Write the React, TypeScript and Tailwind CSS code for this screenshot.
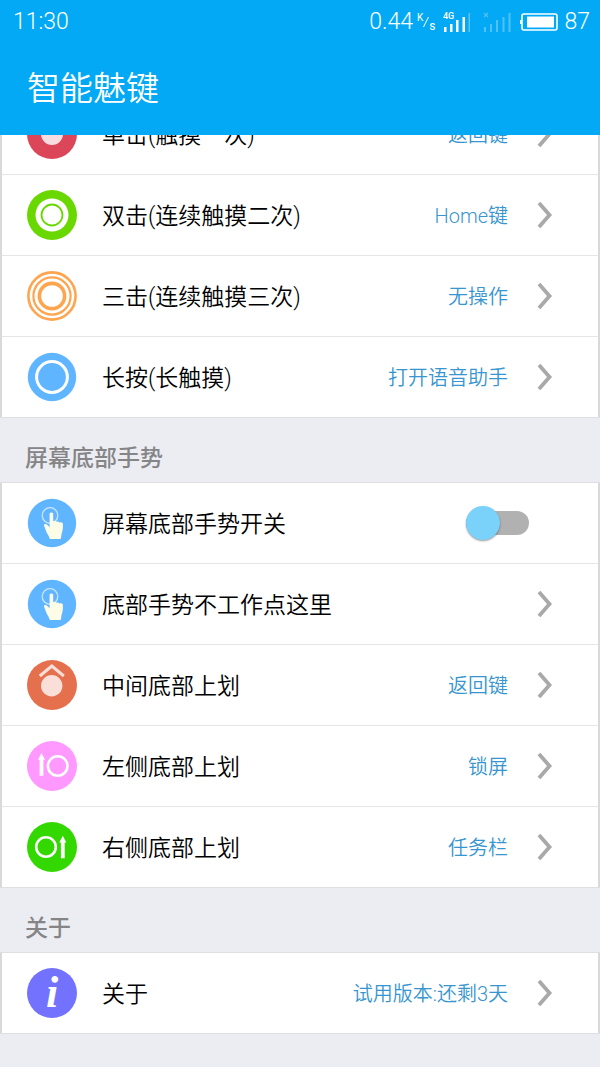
import { useState } from 'react';
import type { ReactNode } from 'react';

interface Item {
  id: string;
  icon: ReactNode;
  label: string;
  value?: string;
}

const SingleTapIcon = () => (
  <svg viewBox="0 0 50 50" className="h-[50px] w-[50px] shrink-0" aria-hidden="true">
    <circle cx="25" cy="25" r="25" fill="#dc4659" />
    <circle cx="25" cy="25" r="11" fill="#f8dcdf" />
  </svg>
);

const DoubleTapIcon = () => (
  <svg viewBox="0 0 50 50" className="h-[50px] w-[50px] shrink-0" aria-hidden="true">
    <circle cx="25" cy="25" r="25" fill="#69d800" />
    <circle cx="25" cy="25" r="16.5" fill="#fff" />
    <circle cx="25" cy="25" r="10.5" fill="none" stroke="#69d800" strokeWidth="1.8" />
  </svg>
);

const TripleTapIcon = () => (
  <svg viewBox="0 0 50 50" className="h-[50px] w-[50px] shrink-0" aria-hidden="true">
    <g fill="#fff" stroke="#ffa54f">
      <circle cx="25" cy="25" r="23.6" strokeWidth="2.6" />
      <circle cx="25" cy="25" r="18.6" strokeWidth="2.2" />
      <circle cx="25" cy="25" r="12.6" strokeWidth="3.6" />
    </g>
  </svg>
);

const LongPressIcon = () => (
  <svg viewBox="0 0 50 50" className="h-[50px] w-[50px] shrink-0" aria-hidden="true">
    <circle cx="25" cy="25" r="24.2" fill="#5fb5ff" />
    <circle cx="25" cy="25" r="15.4" fill="none" stroke="#fff" strokeWidth="3" />
  </svg>
);

const HandIcon = () => (
  <svg viewBox="0 0 50 50" className="h-[50px] w-[50px] shrink-0" aria-hidden="true">
    <circle cx="25" cy="25" r="24.2" fill="#5fb5ff" />
    <circle cx="23" cy="17.5" r="7.8" fill="none" stroke="#c9e5fb" strokeWidth="1.3" />
    <path
      d="M22.6 16c0-2 3.6-2 3.6 0v7.2c.8-.9 2.600-.7 3 .6 1-.8 2.800-.4 3.100.9 1.300-.8 3.500-.2 3.600 1.500.2 3.500-.3 7-1.400 9.700l-.5 4.100c-.1.700-.5 1-1.200 1h-9c-.8 0-1.200-.3-1.400-1-.4-2.500-2.600-4.400-3.500-7.500l-1.800-4.800c-.5-1.500.9-2.200 2.200-1.500 1.500.8 2.500 2 3.300 3.200z"
      fill="#fdfce6"
    />
  </svg>
);

const MiddleSwipeIcon = () => (
  <svg viewBox="0 0 50 50" className="h-[50px] w-[50px] shrink-0" aria-hidden="true">
    <circle cx="25" cy="25" r="25" fill="#e4704e" />
    <circle cx="24.7" cy="25.7" r="10.7" fill="#f9dfd8" />
    <path d="M12.800 16 24.800 6l12 10" fill="none" stroke="#f9dfd8" strokeWidth="3" />
  </svg>
);

const LeftSwipeIcon = () => (
  <svg viewBox="0 0 50 50" className="h-[50px] w-[50px] shrink-0" aria-hidden="true">
    <circle cx="25" cy="25" r="25" fill="#ff99ff" />
    <circle cx="30.7" cy="25" r="9.8" fill="none" stroke="#fff" strokeWidth="2.6" />
    <path d="M14.500 12 18 18.700h-1.600v16.100h-3.800V18.700h-1.600z" fill="#fff" />
  </svg>
);

const RightSwipeIcon = () => (
  <svg viewBox="0 0 50 50" className="h-[50px] w-[50px] shrink-0" aria-hidden="true">
    <circle cx="25" cy="25" r="25" fill="#33d800" />
    <circle cx="19" cy="25" r="9.8" fill="none" stroke="#fff" strokeWidth="2.6" />
    <path d="M35.800 13.800 39.300 20.500h-1.600v15.800h-3.800V20.500h-1.600z" fill="#fff" />
  </svg>
);

const InfoIcon = () => (
  <span
    aria-hidden="true"
    className="flex h-[50px] w-[50px] shrink-0 items-center justify-center rounded-full bg-[#7272ff] font-['Liberation_Serif',serif] text-[44px] leading-none font-bold text-white italic"
  >
    i
  </span>
);

const Chevron = () => (
  <svg viewBox="0 0 16 28" className="h-7 w-4 shrink-0" aria-hidden="true">
    <path d="M2 2l10.500 12L2 26" fill="none" stroke="#a9a9a9" strokeWidth="3.800" />
  </svg>
);

const tapItems: Item[] = [
  { id: 'single', icon: <SingleTapIcon />, label: '单击(触摸一次)', value: '返回键' },
  { id: 'double', icon: <DoubleTapIcon />, label: '双击(连续触摸二次)', value: 'Home键' },
  { id: 'triple', icon: <TripleTapIcon />, label: '三击(连续触摸三次)', value: '无操作' },
  { id: 'long', icon: <LongPressIcon />, label: '长按(长触摸)', value: '打开语音助手' },
];

const gestureItems: Item[] = [
  { id: 'help', icon: <HandIcon />, label: '底部手势不工作点这里' },
  { id: 'middle', icon: <MiddleSwipeIcon />, label: '中间底部上划', value: '返回键' },
  { id: 'left', icon: <LeftSwipeIcon />, label: '左侧底部上划', value: '锁屏' },
  { id: 'right', icon: <RightSwipeIcon />, label: '右侧底部上划', value: '任务栏' },
];

const aboutItems: Item[] = [{ id: 'about', icon: <InfoIcon />, label: '关于', value: '试用版本:还剩3天' }];

const RowLabel = ({ children }: { children: ReactNode }) => (
  <span className="ml-[25px] flex-1 pt-1 text-[23px] font-[350] text-black">{children}</span>
);

const Row = ({ icon, label, value }: Omit<Item, 'id'>) => (
  <li>
    <button type="button" className="flex h-20 w-full items-center pr-[45px] pl-[25px] text-left active:bg-gray-50">
      {icon}
      <RowLabel>{label}</RowLabel>
      {value && <span className="mr-[29px] pt-0.5 text-xl font-[350] text-[#3795cf]">{value}</span>}
      <Chevron />
    </button>
  </li>
);

const SwitchRow = () => {
  const [on, setOn] = useState(false);

  return (
    <li>
      <label className="flex h-20 cursor-pointer items-center pr-[69px] pl-[25px]">
        <HandIcon />
        <RowLabel>屏幕底部手势开关</RowLabel>
        <input
          type="checkbox"
          role="switch"
          checked={on}
          onChange={(e) => setOn(e.target.checked)}
          className="peer sr-only"
        />
        <span className="grid w-[63px] items-center *:col-start-1 *:row-start-1 peer-checked:[&>span:last-child]:translate-x-[29px]">
          <span className="h-6 rounded-full bg-[#b1b1b1]" />
          <span className="h-[34px] w-[34px] rounded-full bg-[#7ad2fa] shadow-[0_1px_2px_rgba(0,0,0,0.4)] transition-transform" />
        </span>
      </label>
    </li>
  );
};

const Group = ({ children }: { children: ReactNode }) => (
  <ul className="divide-y divide-[#e6e6e8] border-x-2 border-x-[#d9d9db] bg-white shadow-[0_0_0_1px_#dfdfe3]">
    {children}
  </ul>
);

const SectionTitle = ({ children }: { children: ReactNode }) => (
  <h2 className="flex h-[66px] items-center px-[25px] pt-[18px] text-[23px] font-medium text-[#858587]">{children}</h2>
);

const StatusBar = () => (
  <div className="flex h-11 items-center pr-[10px] pl-[13px] text-[23px] font-light">
    <span className="flex-1">11:30</span>
    <span>0.44</span>
    <span className="ml-1 flex items-center text-xs leading-none font-normal">
      <span className="pb-2 text-[10px]">K</span>
      <svg viewBox="0 0 6 14" className="h-3.5 w-1.5" aria-hidden="true">
        <path d="M.5 12 5.500 2" stroke="#fff" />
      </svg>
      <span className="pt-2">s</span>
    </span>
    <svg viewBox="0 0 28 20" className="ml-2 h-5 w-7" aria-hidden="true">
      <text x="0" y="7" fill="#fff" fontSize="9" fontWeight="500">
        4G
      </text>
      <g fill="#fff">
        <path d="M1 15h2.500v5H1zM7 12h2.500v8H7zM13 8h2.500v12H13zM19.500 5H22v15h-2.500z" />
        <path d="M25.500 1H27v19h-1.500z" opacity=".35" />
      </g>
    </svg>
    <svg viewBox="0 0 28 20" className="ml-3 h-5 w-7 opacity-30" aria-hidden="true">
      <path d="M1 1l4 4M5 1 1 5" stroke="#fff" strokeWidth="1.200" />
      <path d="M1 15h2v5H1zM7 12h2v8H7zM13 8h2v12h-2zM19.500 5h2v15h-2zM25.500 1h2v19h-2z" fill="#fff" />
    </svg>
    <svg viewBox="0 0 40 20" className="ml-2 h-5 w-10" aria-hidden="true">
      <rect x="3" y="2" width="35" height="16" rx="2" fill="none" stroke="#fff" strokeWidth="1.600" />
      <path d="M1 8h2v4H1z" fill="#fff" />
      <path d="M8 4.500h27v11H8z" fill="#fff" />
    </svg>
    <span className="ml-[5px]">87</span>
  </div>
);

export default function App() {
  return (
    <div className="min-h-screen overflow-hidden bg-[#ecedf2] font-[Roboto,'Noto_Sans_CJK_SC',sans-serif]">
      <header className="relative z-10 bg-[#03a9f4] text-white">
        <StatusBar />
        <h1 className="flex h-[91px] items-center px-[27px] pb-0.5 text-[33px] font-[350]">智能魅键</h1>
      </header>

      {/* list is scrolled a little way under the header */}
      <main className="-mt-[41px] pb-8">
        <Group>
          {tapItems.map(({ id, ...item }) => (
            <Row key={id} {...item} />
          ))}
        </Group>

        <SectionTitle>屏幕底部手势</SectionTitle>
        <Group>
          <SwitchRow />
          {gestureItems.map(({ id, ...item }) => (
            <Row key={id} {...item} />
          ))}
        </Group>

        <SectionTitle>关于</SectionTitle>
        <Group>
          {aboutItems.map(({ id, ...item }) => (
            <Row key={id} {...item} />
          ))}
        </Group>
      </main>
    </div>
  );
}
